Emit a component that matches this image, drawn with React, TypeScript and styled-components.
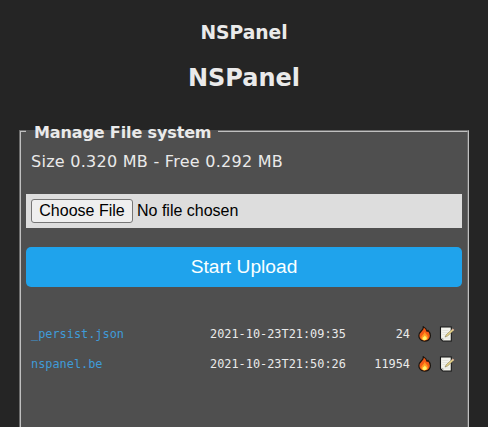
import React from 'react';
import styled, { createGlobalStyle } from 'styled-components';

const GlobalStyle = createGlobalStyle`
  html, body { margin: 0; padding: 0; background: #252525; }
  body { overflow: hidden; }
  * { box-sizing: border-box; }
`;

const Page = styled.main`
  height: 427px;
  padding: 20px 19px 0 19px;
  overflow: hidden;
  background: #252525;
  color: #eaeaea;
  font-family: Verdana, 'DejaVu Sans', sans-serif;
  font-size: 16px;
`;

const Heading = styled.header`
  display: flex;
  flex-direction: column;
  align-items: center;
  padding-top: 1px;
  height: 101px;
`;

const ModuleName = styled.h3`
  margin: 0;
  font-size: 18.72px;
  line-height: 24px;
  letter-spacing: -0.02px;
`;

const DeviceName = styled.h2`
  margin: 18px 0 0;
  font-size: 24px;
  line-height: 30px;
  letter-spacing: 0;
`;

const Panel = styled.fieldset`
  margin: 0;
  padding: 0 5px;
  height: 340px;
  min-width: 0;
  border: 2px groove #c0c0c0;
  background: #4f4f4f;
`;

const PanelTitle = styled.legend`
  padding: 3px 7px 0 8px;
  font-size: 16px;
  font-weight: bold;
  line-height: 17px;
  letter-spacing: -0.13px;
`;

const Usage = styled.div`
  padding: 11px 0 0 5px;
  height: 53px;
  line-height: 20px;
  letter-spacing: 0.27px;
  white-space: nowrap;
`;

const FileField = styled.div`
  display: flex;
  align-items: center;
  gap: 4px;
  height: 34px;
  padding: 0 5px;
  background: #dddddd;
  color: #000;
  font: 16px/20px 'Liberation Sans', Arial, sans-serif;
`;

const ChooseButton = styled.button`
  width: 102px;
  height: 24px;
  margin: 0;
  padding: 0;
  border: 1px solid #767676;
  border-radius: 3px;
  background: #efefef;
  color: #000;
  font: inherit;
  white-space: nowrap;
`;

const UploadButton = styled.button`
  display: block;
  width: 100%;
  height: 40px;
  margin: 19px 0 32px;
  padding: 0;
  border: 0;
  border-radius: 5px;
  background: #1fa3ec;
  color: #faffff;
  font: 19.2px/40px 'Liberation Sans', Arial, sans-serif;
`;

const FileRow = styled.div`
  display: grid;
  grid-template-columns: 179px 136px 64px 14px 15px;
  align-items: center;
  height: 30px;
  padding-left: 5px;
  font: 11.88px/16px Consolas, 'DejaVu Sans Mono', monospace;
  white-space: pre;

  svg { display: block; }
`;

const FileLink = styled.a`
  color: #3f9bd8;
  text-decoration: none;
`;

const FileSize = styled.span`
  text-align: right;
`;

const IconCell = styled.span<{ $offset: number }>`
  margin-left: ${({ $offset }) => $offset}px;
`;

const Fire = () => (
  <svg width="14" height="16" viewBox="0 0 14 16" aria-label="Delete">
    <path d="M5.2 .7 C8.2 1.9 8.7 3.8 9.1 5.3 L10 4.3 C12.4 6.8 12.9 10 11.6 12.5 C9.9 15.9 3.7 16 1.8 12.8 C.2 10 1 7.1 3.3 5 C5 3.4 5.6 2.2 5.2 .7Z" fill="#f45b16" stroke="#191510" strokeWidth="1.2" strokeLinejoin="round" />
    <path d="M6.8 5.5 C7.2 8.3 10.3 8.8 9.9 11.8 C9.4 14.9 4.2 15 3.4 12.2 C2.8 9.8 6.4 8 6.8 5.5Z" fill="#ff9a20" />
    <path d="M6.9 9.2 C7.3 10.8 8.9 10.8 8.8 12.5 C8.5 14.7 4.8 14.7 4.5 12.7 C4.3 11.3 6.5 10.6 6.9 9.2Z" fill="#fff06a" />
  </svg>
);

const Memo = () => (
  <svg width="16" height="16" viewBox="0 0 16 16" aria-label="Edit">
    <path d="M1.5 1 H12.3 V15 H3.8 L1.5 12.7Z" fill="#f4f4ed" stroke="#171717" strokeWidth="1.1" />
    <path d="M3.5 4.5h6M3.5 6.5h5M3.5 8.5h3M4.5 12h6" stroke="#d8d9d4" strokeWidth=".6" />
    <path d="M2 12.4 L4 12.4 V14.4" fill="none" stroke="#a9aaa5" strokeWidth=".8" />
    <path d="M6 11 L7.3 8.6 L13.7 2.7 L15.2 4 L8.7 9.9Z" fill="#e5d28a" stroke="#77704f" strokeWidth=".5" />
    <path d="M13 3.3 L13.8 2.6 L15.2 3.9 L14.3 4.7Z" fill="#d8a7a0" />
  </svg>
);

const files = [
  { name: '_persist.json', date: '2021-10-23T21:09:35', size: '24' },
  { name: 'nspanel.be', date: '2021-10-23T21:50:26', size: '11954' },
];

export default function App() {
  return (
    <>
      <GlobalStyle />
      <Page>
        <Heading>
          <ModuleName>NSPanel</ModuleName>
          <DeviceName>NSPanel</DeviceName>
        </Heading>
        <Panel>
          <PanelTitle>Manage File system</PanelTitle>
          <Usage>Size 0.320 MB - Free 0.292 MB</Usage>
          <FileField>
            <ChooseButton type="button">Choose File</ChooseButton>
            <span>No file chosen</span>
          </FileField>
          <UploadButton type="button">Start Upload</UploadButton>
          {files.map((file) => (
            <FileRow key={file.name}>
              <FileLink>{file.name}</FileLink>
              <span>{file.date}</span>
              <FileSize>{file.size}</FileSize>
              <IconCell $offset={8}><Fire /></IconCell>
              <IconCell $offset={15}><Memo /></IconCell>
            </FileRow>
          ))}
        </Panel>
      </Page>
    </>
  );
}
